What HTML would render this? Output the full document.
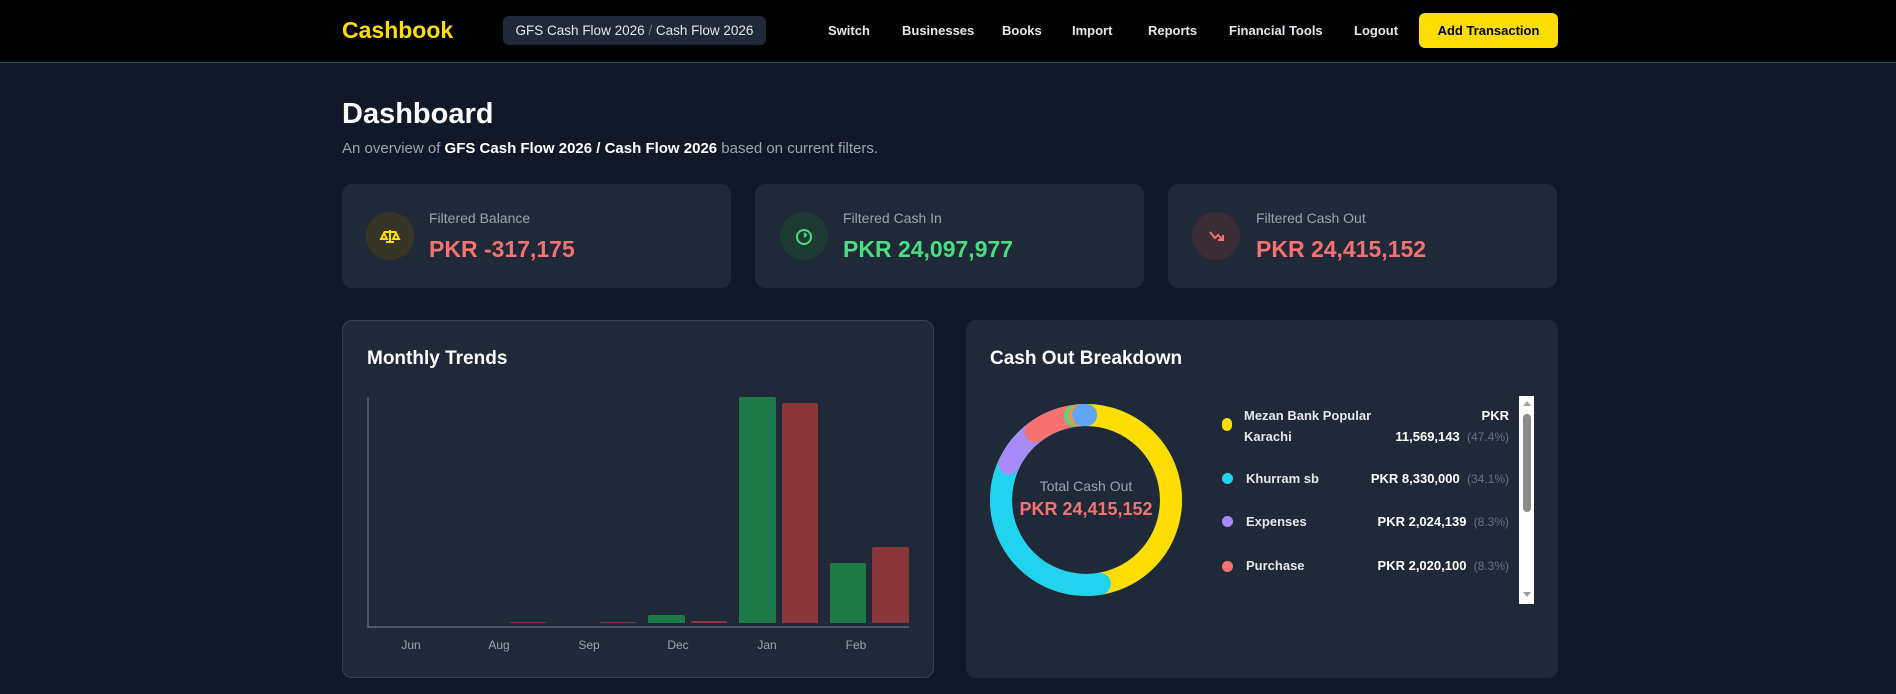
<!DOCTYPE html>
<html><head><meta charset="utf-8"><style>
*{box-sizing:border-box;margin:0;padding:0}
body{width:1896px;height:694px;overflow:hidden;background:#111827;font-family:"Liberation Sans",sans-serif;color:#fff;position:relative}
.hdr{position:absolute;left:0;top:0;width:1896px;height:63px;background:#000;border-bottom:1px solid #374151}
.abs{position:absolute}
.logo{left:342px;top:17px;font-size:23px;font-weight:bold;color:#ffdd00}
.crumb{left:503px;top:16px;width:263px;height:29px;background:#1f2937;border-radius:6px;font-size:13.5px;color:#e5e7eb;line-height:29px;text-align:center}
.nav{top:23px;font-size:13px;font-weight:bold;color:#e5e7eb}
.btn{left:1419px;top:13px;width:139px;height:35px;background:#ffdd00;border-radius:6px;color:#000;font-size:13px;font-weight:bold;line-height:35px;text-align:center}
.card{background:#1f2937;border-radius:10px}
.ic{width:48px;height:48px;border-radius:50%;top:212px}
.lbl{font-size:14px;color:#9ca3af;top:210px}
.val{font-size:23px;font-weight:bold;top:236px}
.bar{position:absolute;border-radius:2px 2px 0 0}
.g{background:#1f7a4a}.r{background:#8b353d}
.xl{position:absolute;top:638px;font-size:12px;color:#9ca3af;width:60px;text-align:center}
.lg{position:absolute;font-size:13px;font-weight:bold;color:#e5e7eb}
.dot{position:absolute;width:11px;height:11px;border-radius:50%;left:1222px}
.amt{position:absolute;right:387px;font-size:13px;font-weight:bold;color:#fff;text-align:right}
.pc{color:#6b7280;font-weight:normal;font-size:12px}
</style></head><body>
<div class="hdr"></div>
<div class="abs logo">Cashbook</div>
<div class="abs crumb">GFS Cash Flow 2026 <span style="color:#6b7280">/</span> Cash Flow 2026</div>
<div class="abs nav" style="left:828px">Switch</div>
<div class="abs nav" style="left:902px">Businesses</div>
<div class="abs nav" style="left:1002px">Books</div>
<div class="abs nav" style="left:1072px">Import</div>
<div class="abs nav" style="left:1148px">Reports</div>
<div class="abs nav" style="left:1229px">Financial Tools</div>
<div class="abs nav" style="left:1354px">Logout</div>
<div class="abs btn">Add Transaction</div>

<div class="abs" style="left:342px;top:98px;font-size:29px;font-weight:bold">Dashboard</div>
<div class="abs" style="left:342px;top:140px;font-size:15px;color:#9ca3af">An overview of <b style="color:#fff">GFS Cash Flow 2026 / Cash Flow 2026</b> based on current filters.</div>

<div class="abs card" style="left:342px;top:184px;width:389px;height:104px"></div>
<div class="abs card" style="left:755px;top:184px;width:389px;height:104px"></div>
<div class="abs card" style="left:1168px;top:184px;width:389px;height:104px"></div>
<div class="abs ic" style="left:366px;background:#363526"><svg width="48" height="48" viewBox="0 0 48 48" fill="none" stroke="#ffdd00" stroke-width="2"><path d="M18 20h12M24 18v12M20 30h8M18 21l-3 6h6zM30 21l-3 6h6z"/></svg></div>
<div class="abs ic" style="left:780px;background:#1e3a33"><svg width="48" height="48" viewBox="0 0 48 48" fill="none" stroke="#4ade80" stroke-width="2"><circle cx="24" cy="25" r="7"/><path d="M24 21l2 2-2 2"/></svg></div>
<div class="abs ic" style="left:1192px;background:#3a2d35"><svg width="48" height="48" viewBox="0 0 48 48" fill="none" stroke="#f87171" stroke-width="2"><path d="M18 20l5 6 3-3 5 5M31 23v5h-5"/></svg></div>
<div class="abs lbl" style="left:429px">Filtered Balance</div>
<div class="abs lbl" style="left:843px">Filtered Cash In</div>
<div class="abs lbl" style="left:1256px">Filtered Cash Out</div>
<div class="abs val" style="left:429px;color:#f87171">PKR -317,175</div>
<div class="abs val" style="left:843px;color:#4ade80">PKR 24,097,977</div>
<div class="abs val" style="left:1256px;color:#f87171">PKR 24,415,152</div>

<div class="abs card" style="left:342px;top:320px;width:592px;height:358px;border:1px solid #374151"></div>
<div class="abs" style="left:367px;top:348px;font-size:19px;font-weight:bold">Monthly Trends</div>
<div class="abs" style="left:367px;top:397px;width:2px;height:231px;background:#4b5563"></div>
<div class="abs" style="left:367px;top:626px;width:542px;height:2px;background:#4b5563"></div>
<div class="bar g" style="left:739px;top:397px;width:37px;height:226px"></div>
<div class="bar r" style="left:782px;top:403px;width:36px;height:220px"></div>
<div class="bar g" style="left:830px;top:563px;width:36px;height:60px"></div>
<div class="bar r" style="left:872px;top:547px;width:37px;height:76px"></div>
<div class="bar g" style="left:648px;top:615px;width:37px;height:8px"></div>
<div class="bar r" style="left:691px;top:621px;width:36px;height:2px"></div>
<div class="bar r" style="left:510px;top:622px;width:36px;height:1px"></div>
<div class="bar r" style="left:600px;top:622px;width:36px;height:1px"></div>
<div class="xl" style="left:381px">Jun</div>
<div class="xl" style="left:469px">Aug</div>
<div class="xl" style="left:559px">Sep</div>
<div class="xl" style="left:648px">Dec</div>
<div class="xl" style="left:737px">Jan</div>
<div class="xl" style="left:826px">Feb</div>

<div class="abs card" style="left:966px;top:320px;width:592px;height:358px"></div>
<div class="abs" style="left:990px;top:348px;font-size:19px;font-weight:bold">Cash Out Breakdown</div>
<svg class="abs" style="left:986px;top:400px" width="200" height="200" viewBox="0 0 200 200">
<g transform="rotate(-90 100 100)" fill="none" stroke-width="22">
<circle cx="100" cy="100" r="85" stroke="#22d3ee" stroke-dasharray="534 0" />
<circle cx="100" cy="100" r="85" stroke="#ffdd00" stroke-dasharray="253 281"/>
<circle cx="100" cy="100" r="85" stroke="#22d3ee" stroke-dasharray="0 253 182 99" stroke-linecap="round"/>
<circle cx="100" cy="100" r="85" stroke="#a78bfa" stroke-dasharray="0 438 40 56" stroke-linecap="round"/>
<circle cx="100" cy="100" r="85" stroke="#f87171" stroke-dasharray="0 480 40 14" stroke-linecap="round"/>
<circle cx="100" cy="100" r="85" stroke="#4ade80" stroke-dasharray="0 523 4 7" stroke-linecap="round"/>
<circle cx="100" cy="100" r="85" stroke="#fb923c" stroke-dasharray="0 527 3 4" stroke-linecap="round"/>
<circle cx="100" cy="100" r="85" stroke="#60a5fa" stroke-dasharray="0 531 3 0" stroke-linecap="round"/>
</g></svg>
<div class="abs" style="left:986px;top:478px;width:200px;text-align:center;font-size:14px;color:#9ca3af">Total Cash Out</div>
<div class="abs" style="left:986px;top:499px;width:200px;text-align:center;font-size:18px;font-weight:bold;color:#f87171">PKR 24,415,152</div>

<div class="dot" style="top:418px;background:#ffdd00;width:10px;height:13px;border-radius:5px"></div>
<div class="lg" style="left:1244px;top:405px;line-height:21px">Mezan Bank Popular<br>Karachi</div>
<div class="amt" style="top:405px;line-height:21px">PKR<br>11,569,143 &nbsp;<span class="pc">(47.4%)</span></div>
<div class="dot" style="top:473px;background:#22d3ee"></div>
<div class="lg" style="left:1246px;top:471px">Khurram sb</div>
<div class="amt" style="top:471px">PKR 8,330,000 &nbsp;<span class="pc">(34.1%)</span></div>
<div class="dot" style="top:516px;background:#a78bfa"></div>
<div class="lg" style="left:1246px;top:514px">Expenses</div>
<div class="amt" style="top:514px">PKR 2,024,139 &nbsp;<span class="pc">(8.3%)</span></div>
<div class="dot" style="top:561px;background:#f87171"></div>
<div class="lg" style="left:1246px;top:558px">Purchase</div>
<div class="amt" style="top:558px">PKR 2,020,100 &nbsp;<span class="pc">(8.3%)</span></div>
<div class="abs" style="left:1519px;top:396px;width:15px;height:208px;background:#fff"></div>
<div class="abs" style="left:1523px;top:414px;width:8px;height:98px;background:#8a8a8a;border-radius:4px"></div>
<div class="abs" style="left:1523px;top:401px;width:0;height:0;border-left:4px solid transparent;border-right:4px solid transparent;border-bottom:5px solid #a0a0a0"></div>
<div class="abs" style="left:1523px;top:592px;width:0;height:0;border-left:4px solid transparent;border-right:4px solid transparent;border-top:5px solid #a0a0a0"></div>
</body></html>
